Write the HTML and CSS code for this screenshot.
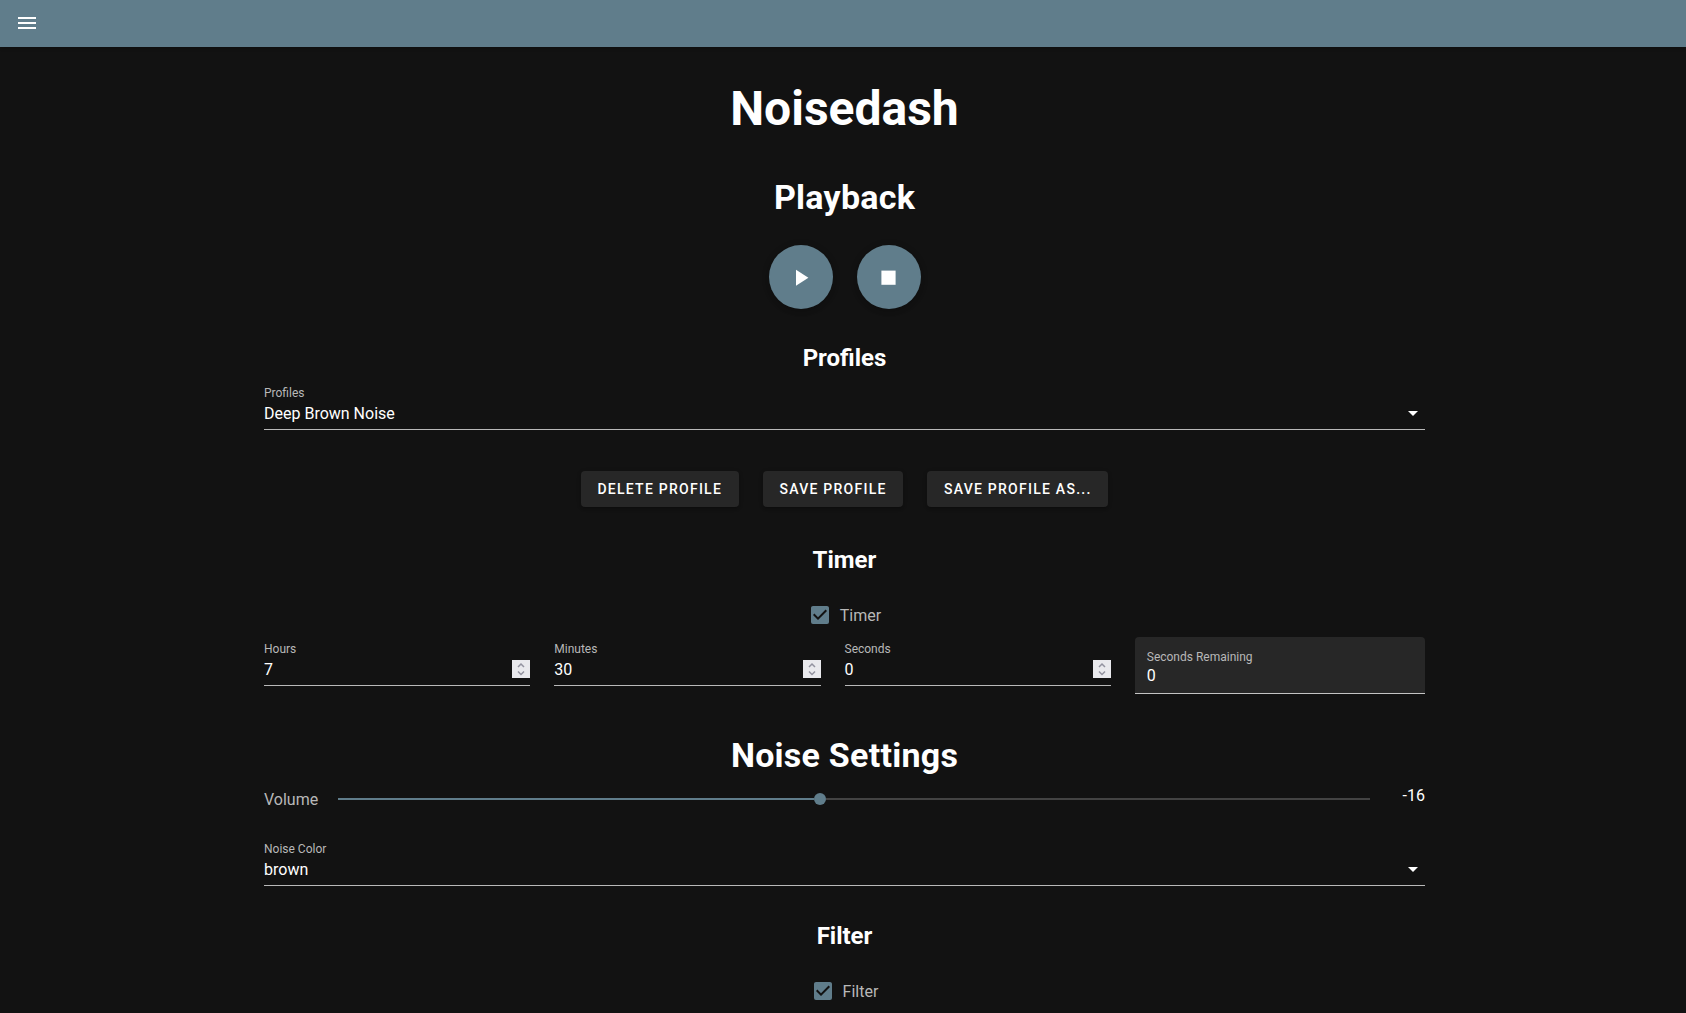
FILE: index.html
```html
<!DOCTYPE html>
<html lang="en">
<head>
<meta charset="utf-8">
<title>Noisedash</title>
<link rel="stylesheet" href="styles.css">
</head>
<body>
<header class="app-bar">
  <svg class="menu-icon" viewBox="0 0 24 24"><path d="M3 6h18v2H3zM3 11h18v2H3zM3 16h18v2H3z"/></svg>
</header>
<main class="container">
  <h1 class="title">Noisedash</h1>

  <h2 class="section playback-title">Playback</h2>
  <div class="playback">
    <button class="fab" aria-label="Play"><svg viewBox="0 0 24 24"><path d="M7 4.7v16l12.4-8z"/></svg></button>
    <button class="fab" aria-label="Stop"><svg viewBox="0 0 24 24"><path d="M4.4 5.6h14.2v14.2H4.4z"/></svg></button>
  </div>

  <h3 class="subsection profiles-title">Profiles</h3>
  <div class="field profile-select">
    <div class="label">Profiles</div>
    <div class="value">Deep Brown Noise<svg class="caret" viewBox="0 0 10 5"><path d="M0 0h10L5 5z"/></svg></div>
  </div>
  <div class="actions">
    <button class="btn">Delete Profile</button>
    <button class="btn">Save Profile</button>
    <button class="btn">Save Profile As...</button>
  </div>

  <h3 class="subsection timer-title">Timer</h3>
  <div class="check">
    <svg class="box" viewBox="3 3 18 18"><path d="M10 17l-5-5 1.41-1.42L10 14.17l7.59-7.59L19 8m0-5H5c-1.11 0-2 .89-2 2v14a2 2 0 0 0 2 2h14a2 2 0 0 0 2-2V5c0-1.11-.9-2-2-2z"/></svg>
    <span>Timer</span>
  </div>
  <div class="timer-fields">
    <div class="col"><div class="field">
      <div class="label">Hours</div>
      <div class="value">7<svg class="spinner" viewBox="0 0 18 18"><path d="M6 7l3-3 3 3M6 11.5l3 3 3-3"/></svg></div>
    </div></div>
    <div class="col"><div class="field">
      <div class="label">Minutes</div>
      <div class="value">30<svg class="spinner" viewBox="0 0 18 18"><path d="M6 7l3-3 3 3M6 11.5l3 3 3-3"/></svg></div>
    </div></div>
    <div class="col"><div class="field">
      <div class="label">Seconds</div>
      <div class="value">0<svg class="spinner" viewBox="0 0 18 18"><path d="M6 7l3-3 3 3M6 11.5l3 3 3-3"/></svg></div>
    </div></div>
    <div class="filled">
      <div class="label">Seconds Remaining</div>
      <div class="value">0</div>
    </div>
  </div>

  <h2 class="section noise-title">Noise Settings</h2>
  <div class="volume">
    <span class="volume-label">Volume</span>
    <div class="slider">
      <div class="slider-fill"></div>
      <div class="slider-thumb"></div>
      <div class="slider-rest"></div>
    </div>
    <span class="volume-value">-16</span>
  </div>
  <div class="field color-select">
    <div class="label">Noise Color</div>
    <div class="value">brown<svg class="caret" viewBox="0 0 10 5"><path d="M0 0h10L5 5z"/></svg></div>
  </div>

  <h3 class="subsection filter-title">Filter</h3>
  <div class="check">
    <svg class="box" viewBox="3 3 18 18"><path d="M10 17l-5-5 1.41-1.42L10 14.17l7.59-7.59L19 8m0-5H5c-1.11 0-2 .89-2 2v14a2 2 0 0 0 2 2h14a2 2 0 0 0 2-2V5c0-1.11-.9-2-2-2z"/></svg>
    <span>Filter</span>
  </div>
</main>
</body>
</html>
```
FILE: styles.css
```css
* { box-sizing: border-box; }
html, body { height: 100%; }
body {
  margin: 0;
  overflow: hidden;
  background: #121212;
  color: #fff;
  font-family: Roboto, "Liberation Sans", sans-serif;
  font-size: 16px;
}
h1, h2, h3 { margin: 0; font-weight: 700; text-align: center; }

.app-bar {
  display: flex;
  align-items: center;
  height: 47px;
  padding: 0 15px;
  background: #607d8b;
  box-shadow: 0 2px 4px -1px rgba(0,0,0,.2);
}
.menu-icon { width: 24px; height: 24px; margin-top: -1px; fill: #fff; }

.container { width: 1161px; margin-left: 264px; }

.title { padding-top: 38px; font-size: 48px; line-height: 48px; }
.section { font-size: 34px; line-height: 40px; letter-spacing: .25px; }
.subsection { font-size: 24px; line-height: 32px; }
.playback-title { margin-top: 44px; }
.profiles-title { margin-top: 33px; }
.timer-title { margin-top: 37px; }
.noise-title { margin-top: 41px; }
.filter-title { margin-top: 34px; }

.playback { display: flex; justify-content: center; gap: 24px; margin-top: 28px; }
.fab {
  display: flex;
  align-items: center;
  justify-content: center;
  width: 64px;
  height: 64px;
  padding: 0;
  border: 0;
  border-radius: 50%;
  background: #607d8b;
  box-shadow: 0 3px 5px -1px rgba(0,0,0,.2), 0 1px 8px rgba(0,0,0,.1);
}
.fab svg { width: 24px; height: 24px; fill: #fff; }

.field { border-bottom: 1px solid #b9b9b9; }
.label { color: #b8b8b8; font-size: 12px; line-height: 20px; }
.value { display: flex; justify-content: space-between; height: 26px; line-height: 22px; }
.caret { width: 10px; height: 5px; margin: 8px 7px 0 0; fill: #fff; }
.profile-select { margin-top: 9px; }
.color-select { margin-top: 16px; }

.actions { display: flex; justify-content: center; gap: 24px; margin-top: 41px; }
.btn {
  height: 36px;
  padding: 0 16.7px;
  border: 0;
  border-radius: 4px;
  background: #272727;
  color: #fff;
  font: 500 14px/36px Roboto, "Liberation Sans", sans-serif;
  letter-spacing: 1.25px;
  text-transform: uppercase;
  box-shadow: 0 2px 2px rgba(0,0,0,.14), 0 1px 5px rgba(0,0,0,.12);
}

.check {
  display: flex;
  justify-content: center;
  gap: 11px;
  height: 18px;
  margin-top: 30px;
  padding-left: 3px;
  color: #b8b8b8;
  line-height: 20px;
}
.box { width: 18px; height: 18px; fill: #607d8b; }

.timer-fields { display: grid; grid-template-columns: repeat(4, 1fr); margin-top: 13px; }
.col { padding: 2px 24px 0 0; }
.spinner { width: 18px; height: 18px; margin-top: 1px; background: #e9e9ed; fill: none; stroke: #9393a0; stroke-width: 1.5; }
.filled {
  height: 57px;
  padding: 12px 12px 0;
  border-bottom: 1px solid #c4c4c4;
  border-radius: 4px 4px 0 0;
  background: #272727;
}
.filled .label { line-height: 16px; }
.filled .value { line-height: 22px; }

.volume { display: flex; align-items: center; height: 48px; }
.volume-label { width: 74px; color: #b8b8b8; line-height: 24px; padding-top: 2px; }
.slider { display: flex; align-items: center; width: 1032px; }
.slider-fill { width: 476px; height: 2px; background: #607d8b; }
.slider-thumb { width: 12px; height: 12px; border-radius: 50%; background: #607d8b; }
.slider-rest { flex: 1; height: 2px; background: #434343; }
.volume-value { flex: 1; margin-bottom: 6px; text-align: right; line-height: 24px; }
```
